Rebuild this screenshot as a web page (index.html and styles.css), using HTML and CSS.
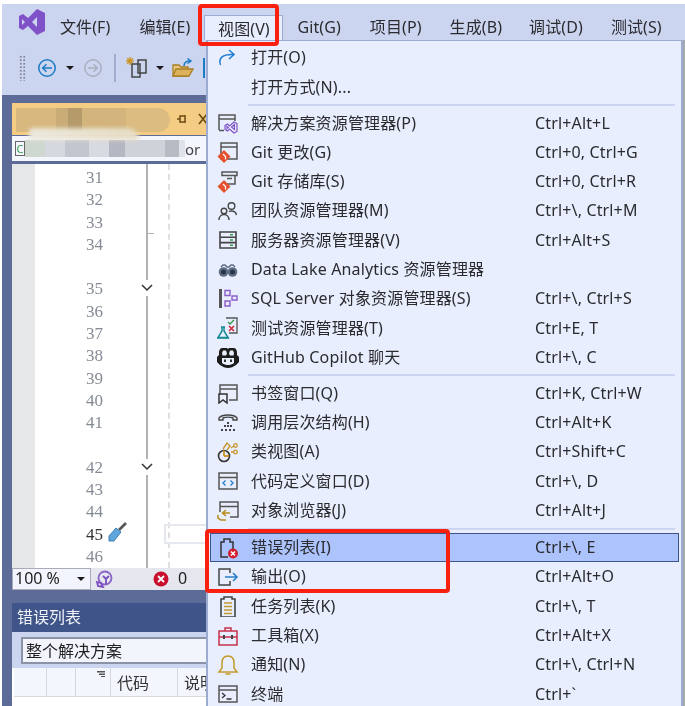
FILE: index.html
```html
<!DOCTYPE html>
<html lang="zh-CN">
<head>
<meta charset="utf-8">
<title>Visual Studio 视图菜单</title>
<link rel="stylesheet" href="styles.css">
</head>
<body>
<div class="app">
  <div class="shell">
    <header class="menubar">
      <svg class="logo" viewBox="0 0 28 28"><path fill="#7f52c8" d="M19 1l8 4v18l-8 4-9-9-5 4-4-2V8l4-2 5 4zM19 9l-5 5 5 5zM4 11v6l3-3z"/></svg>
      <span class="mb-item mb-first">文件(F)</span>
      <span class="mb-item">编辑(E)</span>
      <span class="mb-item mb-active">视图(V)</span>
      <span class="mb-item mb-git">Git(G)</span>
      <span class="mb-item">项目(P)</span>
      <span class="mb-item mb-tight">生成(B)</span>
      <span class="mb-item mb-tighter">调试(D)</span>
      <span class="mb-item mb-tight">测试(S)</span>
    </header>
    <div class="toolbar">
      <span class="grip"></span>
      <svg class="tb-circle" viewBox="0 0 20 20"><circle cx="10" cy="10" r="8.2" fill="none" stroke="#1c7cc4" stroke-width="1.5"/><path d="M15 10H6M9.500 6.200L5.600 10l3.900 3.800" fill="none" stroke="#1c7cc4" stroke-width="1.500"/></svg>
      <span class="tb-drop"></span>
      <svg class="tb-circle tb-next" viewBox="0 0 20 20"><circle cx="10" cy="10" r="8.2" fill="none" stroke="#a7aebd" stroke-width="1.4"/><path d="M5 10h9M10.500 6.200l3.900 3.800-3.900 3.800" fill="none" stroke="#a7aebd" stroke-width="1.400"/></svg>
      <span class="tb-sep"></span>
      <svg class="tb-new" viewBox="0 0 24 24"><path d="M5 1v8M1 5h8M2.200 2.200l5.600 5.600M7.800 2.200L2.200 7.800" stroke="#c9962e" stroke-width="1.500"/><path d="M13 4h8v13h-8zM7 8h8v13H7z" fill="#ccd5f0" stroke="#444" stroke-width="1.500"/></svg>
      <span class="tb-drop tb-drop2"></span>
      <svg class="tb-folder" viewBox="0 0 22 22"><path d="M1 8h6l2 2h7v9H1z" fill="#e8c77e" stroke="#a97f24" stroke-width="1.300"/><path d="M1 19l3-7h17l-4 7z" fill="#dcb35c" stroke="#a97f24" stroke-width="1.300"/><path d="M12 9c0-3 2-5 6-5M15.500 1.500L19 4l-3.500 2.500" fill="none" stroke="#1c7cc4" stroke-width="1.500"/></svg>
      <span class="tb-blue"></span>
    </div>
    <main class="workspace">
      <section class="doc">
        <div class="doc-tab">
          <span class="smudge-tab"></span>
          <svg class="pin" viewBox="0 0 12 12"><path d="M1 6h3M4 3h5v6H4zM9 2v8" fill="none" stroke="#6b4a10" stroke-width="1.500"/></svg>
          <svg class="close" viewBox="0 0 12 12"><path d="M2 1l8 10M10 1L2 11" stroke="#6b4a10" stroke-width="1.600"/></svg>
        </div>
        <div class="doc-nav">
          <span class="nav-c">C</span>
          <span class="smudge-nav"></span>
          <span class="nav-or">or</span>
        </div>
        <div class="editor">
          <div class="margin"></div>
          <div class="gutter">
            <div class="ln">31</div><div class="ln">32</div><div class="ln">33</div><div class="ln">34</div><div class="ln"></div>
            <div class="ln">35</div><div class="ln">36</div><div class="ln">37</div><div class="ln">38</div><div class="ln">39</div><div class="ln">40</div><div class="ln">41</div><div class="ln"></div>
            <div class="ln">42</div><div class="ln">43</div><div class="ln">44</div><div class="ln ln-cur">45</div><div class="ln">46</div>
          </div>
          <div class="fold">
            <span class="fold-tick"></span>
            <svg class="chev chev-a" viewBox="0 0 14 10"><path d="M2 2l5 5 5-5" fill="none" stroke="#333" stroke-width="1.500"/></svg>
            <svg class="chev chev-b" viewBox="0 0 14 10"><path d="M2 2l5 5 5-5" fill="none" stroke="#333" stroke-width="1.500"/></svg>
            <svg class="wrench" viewBox="0 0 24 24"><path d="M14 10l7-7" stroke="#555" stroke-width="2.600"/><path d="M4 16l7-8 5 4-7 9H4z" fill="#5fa6dc" stroke="#3c80b8"/></svg>
          </div>
          <div class="code"><span class="cur-line"></span></div>
        </div>
        <div class="statusbar">
          <div class="zoom-box"><span>100 %</span><span class="tb-drop zoom-arrow"></span></div>
          <svg class="st-bulb" viewBox="0 0 18 18"><circle cx="10" cy="8" r="6.500" fill="none" stroke="#8a63c6" stroke-width="1.800"/><path d="M2 12l4 1 2 4-5-1zM8 6l3 3 3-3M11 9v5" fill="none" stroke="#7a4fc0" stroke-width="1.800"/></svg>
          <svg class="st-err" viewBox="0 0 16 16"><circle cx="8" cy="8" r="7.500" fill="#c8102e"/><path d="M5 5l6 6M11 5l-6 6" stroke="#fff" stroke-width="1.800"/></svg>
          <span class="st-count">0</span>
        </div>
      </section>
      <section class="panel">
        <div class="panel-head">错误列表</div>
        <div class="panel-tools"><div class="scope">整个解决方案</div></div>
        <div class="panel-cols">
          <span class="col col-a"></span>
          <span class="col col-b"></span>
          <span class="col col-c"><svg class="sort" viewBox="0 0 8 6"><path d="M0 0h8v1.500H0zM2 2.500h6V4H2zM4 5h4v1H4z" fill="#555"/></svg></span>
          <span class="col col-d">代码</span>
          <span class="col col-e">说明</span>
        </div>
      </section>
    </main>
  </div>

  <nav class="menu">
    <div class="row"><svg class="ic" viewBox="0 0 22 22"><path d="M3.500 18C1 11 6 7 16 7.500M12 3l5 4.500-5 4.500" fill="none" stroke="#1c7cd5" stroke-width="1.500"/></svg><span>打开(O)</span><span></span></div>
    <div class="row"><span></span><span>打开方式(N)...</span><span></span></div>
    <div class="sep"></div>

    <div class="row"><svg class="ic" viewBox="0 0 22 22"><path d="M2 18V3h16v6M2 7h16M2 18.500h5" fill="none" stroke="#555" stroke-width="1.500"/><path d="M8 13.500l2.500-1.500 2 2 4.500-4 3 1.500v8l-3 1.500-4.500-4-2 2L8 17.500zM10 14.500v2l1.200-1zM17.500 12.500l-3 2.500 3 2.500z" fill="#e9eefd" stroke="#7f52c8" stroke-width="1.200"/></svg><span>解决方案资源管理器(P)</span><span>Ctrl+Alt+L</span></div>
    <div class="row"><svg class="ic" viewBox="0 0 22 22"><path d="M4 2h16v16H4zM4 6h16" fill="#e9eefd" stroke="#555" stroke-width="1.500"/><path d="M7 9l6.500 6.500L7 22 .5 15.500z" fill="#e4512f"/><path d="M6 13l2.500 2.500v3" stroke="#fff" stroke-width="1.200" fill="none"/></svg><span>Git 更改(G)</span><span>Ctrl+0, Ctrl+G</span></div>
    <div class="row"><svg class="ic" viewBox="0 0 22 22"><path d="M5 1h15v3.500H5zM7 4.500h11V13H10" fill="none" stroke="#555" stroke-width="1.500"/><path d="M10 7.500h5" stroke="#555" stroke-width="1.500"/><path d="M7 9l6.500 6.500L7 22 .5 15.500z" fill="#e4512f"/><path d="M6 13l2.500 2.500v3" stroke="#fff" stroke-width="1.200" fill="none"/></svg><span>Git 存储库(S)</span><span>Ctrl+0, Ctrl+R</span></div>
    <div class="row"><svg class="ic" viewBox="0 0 22 22"><circle cx="14.500" cy="6" r="3.300" fill="none" stroke="#444" stroke-width="1.400"/><path d="M12 11.500c.7-.4 1.600-.5 2.500-.5 2.500 0 4.500 1.500 5 4" fill="none" stroke="#444" stroke-width="1.400"/><circle cx="7" cy="11" r="2.800" fill="none" stroke="#444" stroke-width="1.400"/><path d="M2 20c0-3.500 2.300-5.500 5-5.500s5 2 5 5.500" fill="none" stroke="#444" stroke-width="1.400"/></svg><span>团队资源管理器(M)</span><span>Ctrl+\, Ctrl+M</span></div>
    <div class="row"><svg class="ic" viewBox="0 0 22 22"><path d="M3 3h16v16H3zM3 8.300h16M3 13.600h16" fill="#e9eefd" stroke="#444" stroke-width="1.600"/><path d="M13 5.700h3M13 11h3M13 16.300h3" stroke="#3a9a4e" stroke-width="1.400"/></svg><span>服务器资源管理器(V)</span><span>Ctrl+Alt+S</span></div>
    <div class="row"><svg class="ic" viewBox="0 0 22 22"><circle cx="6.500" cy="13" r="4.800" fill="#5e6d84"/><circle cx="15.500" cy="13" r="4.800" fill="#5e6d84"/><circle cx="6.500" cy="13" r="2.500" fill="#2a3648"/><circle cx="15.500" cy="13" r="2.500" fill="#2a3648"/><path d="M4 8l2-2h2l2 2h2l2-2h2l2 2" fill="none" stroke="#5e6d84" stroke-width="1.500"/></svg><span>Data Lake Analytics 资源管理器</span><span></span></div>
    <div class="row"><svg class="ic" viewBox="0 0 22 22"><path d="M2 1h3v19H2z" fill="#555"/><path d="M8 2.500h5v5H8zM8 13h5v5H8zM15 8h5v4h-5z" fill="none" stroke="#8a5cc8" stroke-width="1.400"/></svg><span>SQL Server 对象资源管理器(S)</span><span>Ctrl+\, Ctrl+S</span></div>
    <div class="row"><svg class="ic" viewBox="0 0 22 22"><path d="M9 1h11v15H12" fill="none" stroke="#555" stroke-width="1.300"/><path d="M11 5l2 2 4-4" fill="none" stroke="#3a9a4e" stroke-width="1.500"/><path d="M12 9l5 5M17 9l-5 5" stroke="#d0283c" stroke-width="1.600"/><path d="M4 10h4M5 10v4l-4 6.500h10L7 14v-4" fill="none" stroke="#178a95" stroke-width="1.500"/><path d="M0 21h12" stroke="#178a95" stroke-width="1.500"/></svg><span>测试资源管理器(T)</span><span>Ctrl+E, T</span></div>
    <div class="row"><svg class="ic" viewBox="0 0 22 22"><path fill="#1c1c1c" d="M6 1h4l1 1 1-1h4c3 0 4 2 4 5v2l2 2v5l-3 3c-3 2-5 3-8 3s-5-1-8-3l-3-3v-5l2-2V6c0-3 1-5 4-5z"/><path fill="#e9eefd" d="M6 3.500h3l1 3-1 2H5.500L5 6zM13 3.500h3l1 2.500-.5 2.500H13l-1-2zM5 11h12v5c-2 1.500-4 2-6 2s-4-.5-6-2z"/><path d="M8 12.500v2.500M14 12.500v2.500" stroke="#1c1c1c" stroke-width="1.800"/></svg><span>GitHub Copilot 聊天</span><span>Ctrl+\, C</span></div>
    <div class="sep"></div>

    <div class="row"><svg class="ic" viewBox="0 0 22 22"><path d="M3 14V3h17v15H12M3 7h17" fill="none" stroke="#555" stroke-width="1.500"/><path d="M2 12h8v9l-4-3-4 3z" fill="#e9eefd" stroke="#333" stroke-width="1.500"/></svg><span>书签窗口(Q)</span><span>Ctrl+K, Ctrl+W</span></div>
    <div class="row"><svg class="ic" viewBox="0 0 22 22"><path d="M2 8V6c3-4 15-4 18 0v2h-4V6c-3-1-7-1-10 0v2z" fill="none" stroke="#444" stroke-width="1.400"/><path d="M10 10h2v2h-2zM7 13h2v2H7zM13 13h2v2h-2zM10 13h2v2h-2zM4 17h2v2H4zM8 17h2v2H8zM12 17h2v2h-2zM16 17h2v2h-2z" fill="#444"/></svg><span>调用层次结构(H)</span><span>Ctrl+Alt+K</span></div>
    <div class="row"><svg class="ic" viewBox="0 0 22 22"><circle cx="7" cy="15" r="5.500" fill="none" stroke="#333" stroke-width="1.600"/><path d="M7 15V9.500M7 15h5" stroke="#c9962e" stroke-width="1.800"/><path d="M6 8l4-6 3 3-3 4M14 7l3-2M14 11h3" fill="none" stroke="#c9962e" stroke-width="1.400"/><circle cx="18.500" cy="4.500" r="1.800" fill="none" stroke="#c9962e" stroke-width="1.300"/><circle cx="18.500" cy="11" r="1.800" fill="none" stroke="#c9962e" stroke-width="1.300"/></svg><span>类视图(A)</span><span>Ctrl+Shift+C</span></div>
    <div class="row"><svg class="ic" viewBox="0 0 22 22"><path d="M2 3h18v16H2zM2 7.500h18" fill="none" stroke="#555" stroke-width="1.500"/><path d="M8.500 10.500L6 13l2.500 2.500M13.500 10.500L16 13l-2.500 2.500" fill="none" stroke="#2a7fc8" stroke-width="1.400"/></svg><span>代码定义窗口(D)</span><span>Ctrl+\, D</span></div>
    <div class="row"><svg class="ic" viewBox="0 0 22 22"><path d="M3 13V3h18v15H13M3 7.500h18" fill="none" stroke="#555" stroke-width="1.500"/><path d="M9 11L5.500 14 9 17M6 14h7M1 16v3l3 2h5" fill="none" stroke="#b98a1e" stroke-width="1.500"/></svg><span>对象浏览器(J)</span><span>Ctrl+Alt+J</span></div>
    <div class="sep sep-wide"></div>

    <div class="row row-hot"><svg class="ic" viewBox="0 0 22 22"><path d="M11 20H4V5h3V2h6v3h3v7" fill="none" stroke="#333" stroke-width="1.500"/><circle cx="16" cy="16.500" r="5" fill="#d0202e"/><path d="M14 14.500l4 4M18 14.500l-4 4" stroke="#fff" stroke-width="1.500"/></svg><span>错误列表(I)</span><span>Ctrl+\, E</span></div>
    <div class="row"><svg class="ic" viewBox="0 0 22 22"><path d="M13 7V3H2v16h11v-4" fill="none" stroke="#444" stroke-width="1.500"/><path d="M8 11h12M16 7l4 4-4 4" fill="none" stroke="#2a7fc8" stroke-width="1.600"/></svg><span>输出(O)</span><span>Ctrl+Alt+O</span></div>
    <div class="row"><svg class="ic" viewBox="0 0 22 22"><path d="M4 4h3V2h8v2h3v18H4z" fill="#e9eefd" stroke="#444" stroke-width="1.600"/><path d="M7 8h8M7 11.500h8M7 15h8M7 18.500h8" stroke="#c29a2c" stroke-width="1.500"/></svg><span>任务列表(K)</span><span>Ctrl+\, T</span></div>
    <div class="row"><svg class="ic" viewBox="0 0 22 22"><path d="M2 6h18v14H2zM8 6V3h6v3M2 12h18" fill="none" stroke="#c8324a" stroke-width="1.500"/><path d="M6 10h2v4H6zM14 10h2v4h-2z" fill="#444"/></svg><span>工具箱(X)</span><span>Ctrl+Alt+X</span></div>
    <div class="row"><svg class="ic" viewBox="0 0 22 22"><path d="M11 2c4 0 6 3 6 7v5l3 4H2l3-4V9c0-4 2-7 6-7zM8.500 20h5" fill="#e9eefd" stroke="#c29a2c" stroke-width="1.500"/></svg><span>通知(N)</span><span>Ctrl+\, Ctrl+N</span></div>
    <div class="row"><svg class="ic" viewBox="0 0 22 22"><path d="M2 3h18v16H2zM2 7h18" fill="none" stroke="#555" stroke-width="1.500"/><path d="M5 10l3 2.500L5 15M9.500 16h5" fill="none" stroke="#333" stroke-width="1.300"/></svg><span>终端</span><span>Ctrl+`</span></div>
  </nav>

  <div class="mark mark-tab"></div>
  <div class="mark mark-rows"></div>
</div>
</body>
</html>
```

FILE: styles.css
```css
* { box-sizing: border-box; }
html, body { margin: 0; padding: 0; background: #fff; }
body { width: 685px; height: 706px; overflow: hidden; }

.app {
  position: relative;
  width: 685px;
  height: 706px;
  padding: 4px 0 0 2px;
  overflow: hidden;
  font: 16px/1.2 "Noto Sans", "Noto Sans CJK SC", sans-serif;
  color: #2b2b30;
  filter: blur(.3px);
}
.shell { display: flex; flex-direction: column; height: 702px; background: #ccd5f0; }

/* menu bar */
.menubar { display: flex; align-items: flex-end; height: 36px; padding: 0 0 3px 16px; white-space: nowrap; letter-spacing: .1px; }
.logo { width: 28px; height: 28px; margin-bottom: 1px; flex: none; }
.mb-item { margin-left: 29px; line-height: 20px; flex: none; }
.mb-first { margin-left: 14px; }
.mb-tight { margin-left: 28px; }
.mb-tighter { margin-left: 27px; }
.mb-active {
  position: relative;
  z-index: 3;
  display: flex;
  align-items: center;
  justify-content: center;
  width: 79px;
  height: 25px;
  margin: 0 0 -3px 14px;
  padding-top: 1px;
  background: #e8eefd;
  border: 1px solid #9cabd0;
  border-bottom: 0;
}
.mb-git { margin-left: 14px; }

/* toolbar */
.toolbar { display: flex; align-items: center; height: 55px; padding: 1px 0 0 17px; }
.grip {
  width: 7px; height: 26px; flex: none;
  background-image: radial-gradient(circle, #7d8595 1px, transparent 1.300px);
  background-size: 3.500px 3.500px;
}
.tb-circle { width: 20px; height: 20px; margin-left: 11px; flex: none; }
.tb-next { margin-left: 9px; }
.tb-drop { width: 0; height: 0; margin-left: 9px; flex: none; border: 4px solid transparent; border-top: 4px solid #1a1a1a; border-bottom: 0; }
.tb-sep { width: 2px; height: 28px; margin-left: 11px; flex: none; background: #9fadcf; }
.tb-new { width: 24px; height: 24px; margin-left: 9px; flex: none; }
.tb-drop2 { margin-left: 7px; }
.tb-folder { width: 22px; height: 22px; margin-left: 8px; flex: none; }
.tb-blue { width: 2px; height: 20px; margin-left: 9px; flex: none; background: #1c7cc4; }

/* workspace */
.workspace { display: flex; flex-direction: column; flex: 1; padding: 8px 0 0 10px; background: #5d6b99; }
.doc { width: 200px; }
.doc-tab { position: relative; display: flex; align-items: center; height: 32px; background: #f5cc84; }
.smudge-tab {
  width: 154px; height: 24px; margin: 2px 0 0 4px; flex: none;
  background: linear-gradient(90deg, #d8b87e 0 40px, #c9ac76 40px 52px, #b59a6a 52px 66px, #d2b47c 66px 110px, #dcbc80 110px 154px);
  border-radius: 0 12px 12px 0;
}
.pin { width: 12px; height: 12px; margin-left: 6px; flex: none; }
.close { width: 12px; height: 12px; margin-left: 9px; flex: none; }

.doc-nav { display: flex; align-items: center; height: 25px; margin-top: 1px; padding-left: 3px; background: #f4f6fd; }
.nav-c { width: 10px; height: 15px; flex: none; font-size: 11px; line-height: 13px; text-align: center; color: #3a9a4e; border: 1px solid #666; }
.smudge-nav {
  position: relative;
  width: 160px; height: 17px; flex: none;
  background: linear-gradient(90deg, #cfd8cf 0 20px, #d6d8e0 20px 40px, #c4c6cf 40px 64px, #d8dae2 64px 84px, #b5b7c2 84px 100px, #d0d2da 100px 140px, #b8bac4 140px 154px, #e0e2ea 154px 160px);
}
.smudge-nav::before {
  content: "";
  position: absolute;
  left: 4px; top: -12px;
  width: 110px; height: 12px;
  background: linear-gradient(90deg, #ece8dc, #e6dcc4);
  border-radius: 10px 30px 0 0;
  filter: blur(2px);
}
.nav-or { font-size: 15px; color: #444; }

.editor { display: flex; height: 404px; margin-top: 3px; padding-top: 3px; background: #fff; }
.margin { width: 23px; margin-top: -3px; flex: none; background: #e6e7e8; }
.gutter { width: 111px; padding-right: 43px; flex: none; font: 17px/22.300px "Liberation Serif", serif; text-align: right; color: #858a94; }
.ln { height: 22.300px; }
.ln-cur { color: #333; }
.fold { position: relative; width: 24px; margin-top: -3px; flex: none; border-left: 2px solid #b2b2b2; border-right: 2px dashed #e0e0e0; }
.fold-tick { position: absolute; left: 0; top: 69px; width: 6px; height: 1px; background: #b2b2b2; }
.chev { position: absolute; left: -8px; width: 14px; height: 16px; padding: 3px 0; background: #fff; }
.chev-a { top: 116px; }
.chev-b { top: 295px; }
.wrench { position: absolute; left: -43px; top: 356px; width: 24px; height: 24px; }
.code { flex: 1; position: relative; margin-top: -3px; }
.cur-line { position: absolute; left: -6px; top: 360px; width: 60px; height: 20px; border: 2px solid #e6e8f0; }

.statusbar { display: flex; align-items: center; height: 22px; background: #e6e7ee; }
.zoom-box { display: flex; align-items: center; justify-content: space-between; width: 79px; height: 22px; padding: 0 5px 0 2px; background: #f2f5fd; border: 1px solid #aab; color: #222; }
.zoom-arrow { margin-left: 0; }
.st-bulb { width: 18px; height: 18px; margin-left: 4px; flex: none; }
.st-err { width: 16px; height: 16px; margin-left: 40px; flex: none; }
.st-count { margin-left: 9px; color: #222; }

/* error list */
.panel { width: 200px; margin-top: 13px; flex: 1; background: #fff; }
.panel-head { height: 29px; padding-left: 5px; line-height: 29px; background: #3f5489; color: #f0f2f8; }
.panel-tools { height: 36px; padding: 5px 0 4px 9px; background: #ccd5f0; }
.scope { height: 27px; padding-left: 3px; line-height: 24px; background: #f3f5fd; border: 2px solid #8a93a8; border-right: 0; color: #222; }
.panel-cols { display: flex; height: 29px; margin-left: 2px; background: #f4f6fd; border-bottom: 1px solid #d6d8de; }
.col { position: relative; flex: none; height: 28px; line-height: 30px; padding-left: 6px; border-right: 1px solid #d6d8de; white-space: nowrap; color: #333; }
.col-a { width: 33px; }
.col-b { width: 29px; }
.col-c { width: 35px; }
.col-d { width: 67px; }
.col-e { width: 50px; border-right: 0; }
.sort { position: absolute; right: 5px; top: 3px; width: 8px; height: 6px; }

/* dropdown */
.menu {
  position: absolute;
  z-index: 2;
  left: 206px;
  top: 40px;
  width: 477px;
  height: 666px;
  padding: 2.400px 2px 0;
  background: #e8eefd;
  border: 1px solid #9cabd0;
  border-width: 1px 2px 0;
  box-shadow: 2px 0 0 #a6a8b0;
  letter-spacing: .15px;
}
.row { display: grid; grid-template-columns: 41px 284px 1fr; align-items: center; height: 29.300px; white-space: nowrap; color: #2b2b30; }
.row-hot { background: #adc3fb; box-shadow: inset 0 0 0 1px #3f5489; }
.ic { width: 22px; height: 22px; margin-left: 7px; }
.sep { height: 6.500px; margin: 0 4px 0 38px; background: linear-gradient(#ccd5f0, #ccd5f0) center / 100% 2px no-repeat; }
.sep-wide { height: 8px; }

/* red annotation boxes */
.mark { position: absolute; z-index: 4; border: 4px solid #fa2010; border-radius: 4px; }
.mark-tab { left: 198px; top: 4px; width: 81px; height: 42px; }
.mark-rows { left: 205px; top: 529px; width: 245px; height: 64px; }
```
